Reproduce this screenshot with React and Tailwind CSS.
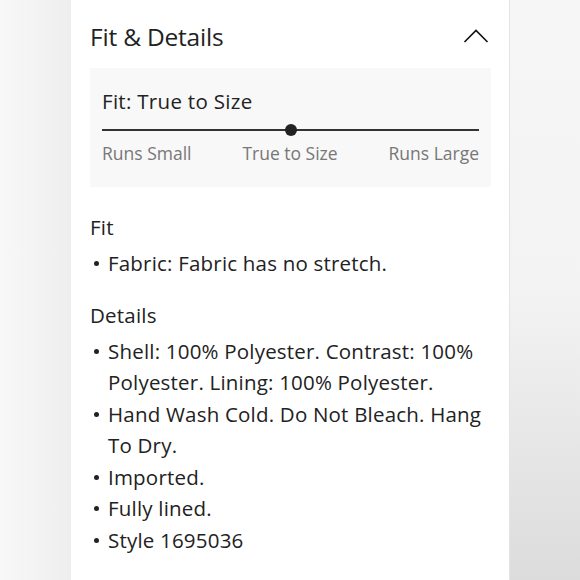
import React from "react";

const items = [
  "Shell: 100% Polyester. Contrast: 100% Polyester. Lining: 100% Polyester.",
  "Hand Wash Cold. Do Not Bleach. Hang To Dry.",
  "Imported.",
  "Fully lined.",
  "Style 1695036",
];

function Bullet({ children }) {
  return (
    <li className="flex">
      <span className="flex h-[31.5px] w-[18px] shrink-0 items-center pl-[4px]">
        <span className="h-[5px] w-[5px] rounded-full bg-[#222]" />
      </span>
      <span>{children}</span>
    </li>
  );
}

export default function App() {
  return (
    <div
      className="flex h-[580px] w-[580px] overflow-hidden text-[#222]"
      style={{ fontFamily: "'Open Sans', Lato, sans-serif" }}
    >
      <div className="w-[71px] shrink-0 bg-gradient-to-r from-[#f8f8f8] to-[#eeeeee]" />
      <div className="w-[438px] shrink-0 bg-white px-[19px] pr-[18px]">
        <div className="flex h-[68px] items-center justify-between pt-[7px]">
          <h2 className="text-[24.5px] leading-none tracking-[-0.2px]">Fit &amp; Details</h2>
          <svg width="26" height="16" viewBox="0 0 26 16" className="mr-[2px] -mt-[4px]">
            <path d="M1.5 14 L13 2.5 L24.5 14" fill="none" stroke="#111" strokeWidth="1.6" />
          </svg>
        </div>
        <div className="h-[119px] bg-[#f8f8f8] px-[12px] pt-[20px]">
          <div className="text-[20.5px] leading-[26px] tracking-[0.3px]">Fit: True to Size</div>
          <div className="relative mt-[10px] h-[12px]">
            <div className="absolute left-0 right-0 top-[5px] h-[2px] bg-[#333]" />
            <div className="absolute left-1/2 top-0 h-[12px] w-[12px] -translate-x-1/2 rounded-full bg-[#222]" />
          </div>
          <div className="mt-[5px] flex justify-between text-[17.5px] leading-[24px] text-[#777]">
            <span>Runs Small</span>
            <span>True to Size</span>
            <span>Runs Large</span>
          </div>
        </div>
        <div className="pt-[25px] text-[20.5px] leading-[31.5px] tracking-[0.2px]">
          <div>Fit</div>
          <ul className="mt-[4px]">
            <Bullet>Fabric: Fabric has no stretch.</Bullet>
          </ul>
          <div className="mt-[21px]">Details</div>
          <ul className="mt-[4px]">
            {items.map((t) => (
              <Bullet key={t}>{t}</Bullet>
            ))}
          </ul>
        </div>
      </div>
      <div className="flex-1 border-l border-[#e4e4e4] bg-gradient-to-b from-[#f6f6f6] via-[#f3f3f3] to-[#dcdcdc]" />
    </div>
  );
}
